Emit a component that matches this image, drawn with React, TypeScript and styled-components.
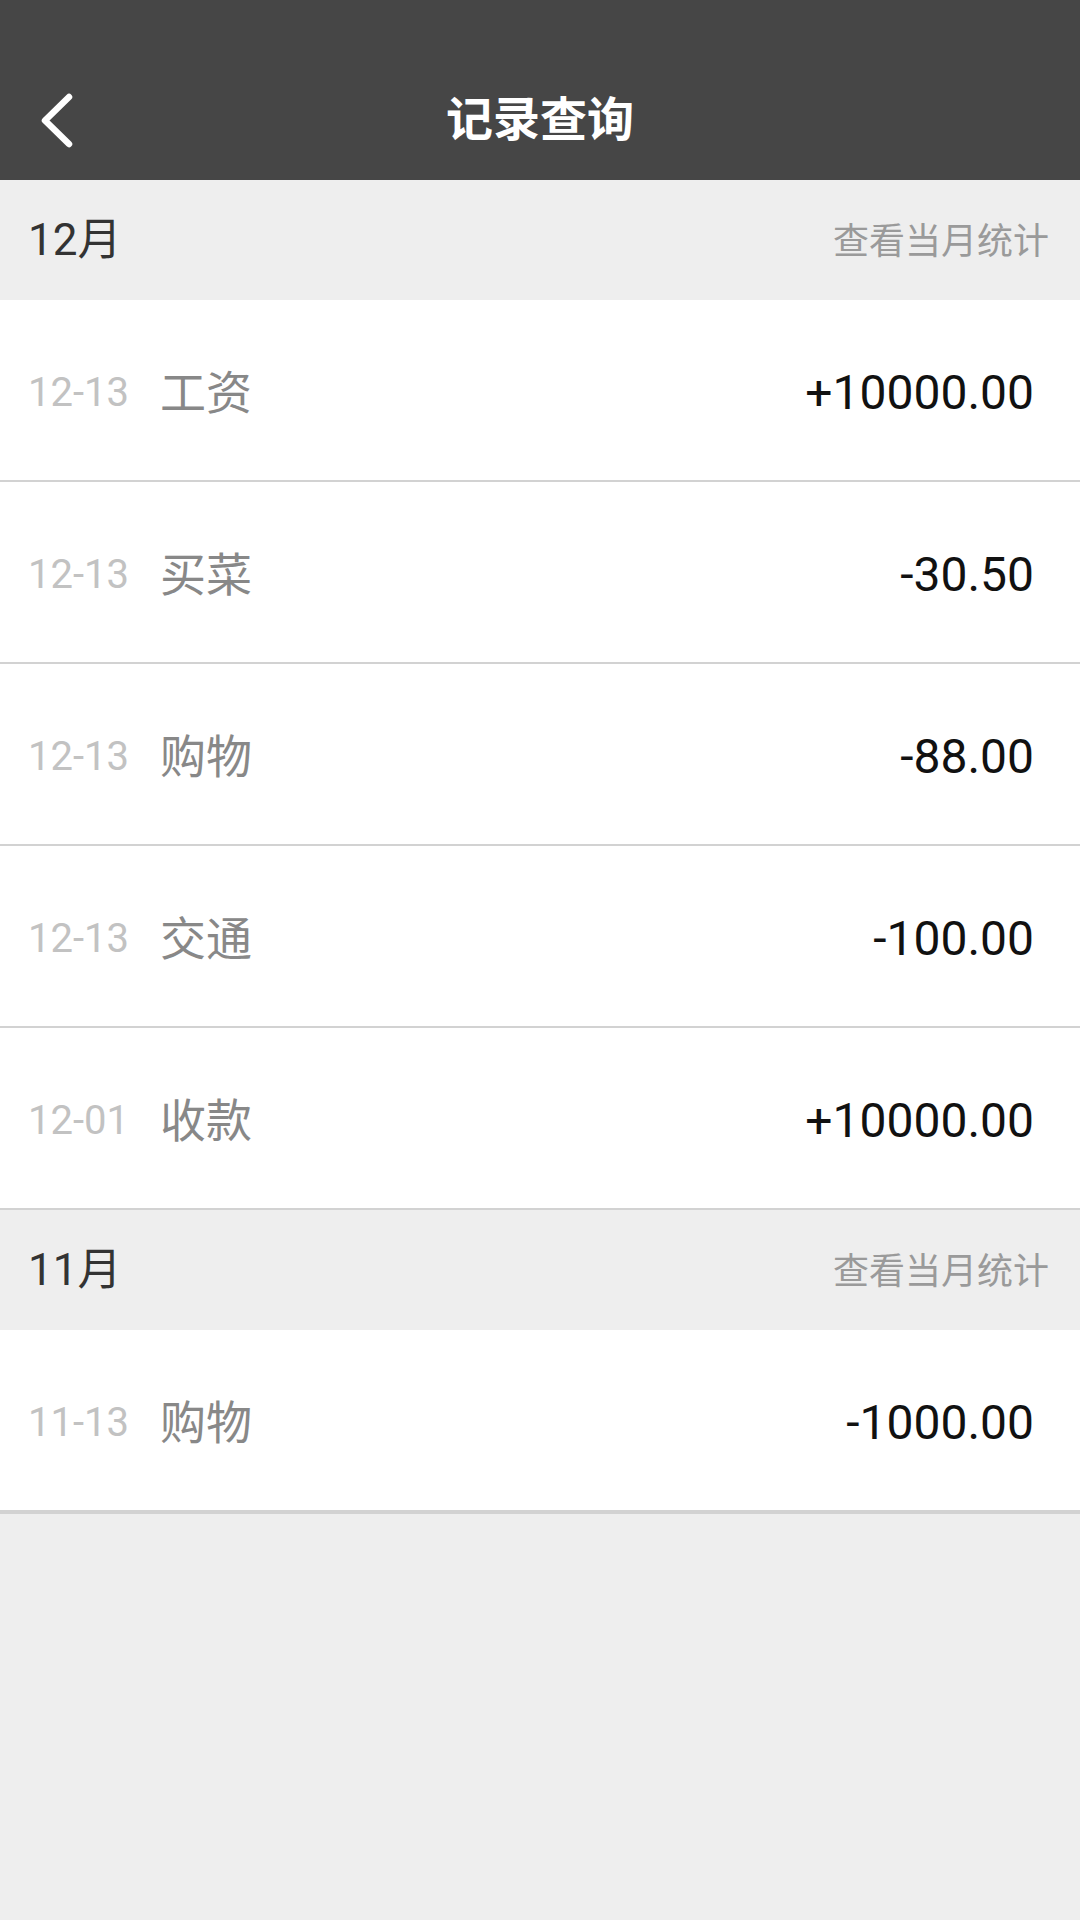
import React from "react";
import styled, { createGlobalStyle } from "styled-components";

const GlobalStyle = createGlobalStyle`
  html, body {
    margin: 0;
    padding: 0;
    background: #eeeeee;
  }
  body {
    font-family: Roboto, "Noto Sans CJK SC", sans-serif;
    -webkit-font-smoothing: antialiased;
  }
  * { box-sizing: border-box; }
`;

const Page = styled.div`
  width: 1080px;
  min-height: 1920px;
  background: #eeeeee;
  display: flex;
  flex-direction: column;
`;

const TopBar = styled.header`
  height: 180px;
  padding-top: 60px;
  background: #464646;
  display: grid;
  grid-template-columns: 140px 1fr 140px;
  align-items: center;
`;

const BackButton = styled.button`
  all: unset;
  width: 120px;
  height: 120px;
  display: flex;
  align-items: center;
  justify-content: flex-start;
  padding-left: 38px;
  cursor: pointer;
`;

const Title = styled.h1`
  margin: 0;
  padding-bottom: 10px;
  text-align: center;
  color: #ffffff;
  font-family: "Noto Sans CJK SC", sans-serif;
  font-weight: 700;
  font-size: 47px;
  line-height: 1;
`;

const MonthBar = styled.div`
  height: 120px;
  background: #eeeeee;
  display: flex;
  align-items: center;
  justify-content: space-between;
  padding: 0 31px 0 28px;
`;

const MonthLabel = styled.span`
  font-family: Roboto, "Noto Sans CJK SC", sans-serif;
  font-size: 44px;
  line-height: 1;
  color: #333333;
`;

const StatsLink = styled.span`
  font-family: "Noto Sans CJK SC", sans-serif;
  font-size: 36px;
  line-height: 1;
  padding-bottom: 5px;
  color: #9a9a9a;
`;

const List = styled.div<{ $last?: boolean }>`
  background: #ffffff;
  border-bottom: ${(p) => (p.$last ? "2px solid #d2d2d2" : "none")};
`;

const Row = styled.div`
  height: 182px;
  padding: 6px 46px 0 28px;
  display: flex;
  align-items: center;
  border-bottom: 2px solid #d2d2d2;
  background: #ffffff;
`;

const DateText = styled.span`
  font-family: Roboto, sans-serif;
  font-size: 40px;
  line-height: 1;
  color: #c2c2c2;
  margin-right: 31px;
`;

const Category = styled.span`
  font-family: "Noto Sans CJK SC", sans-serif;
  font-size: 46px;
  line-height: 1;
  padding-bottom: 9px;
  color: #888888;
  flex: 1;
`;

const Amount = styled.span`
  font-family: Roboto, sans-serif;
  font-size: 48px;
  line-height: 1;
  color: #111111;
`;

type Item = { date: string; name: string; amount: string };
type Group = { month: string; items: Item[] };

const groups: Group[] = [
  {
    month: "12月",
    items: [
      { date: "12-13", name: "工资", amount: "+10000.00" },
      { date: "12-13", name: "买菜", amount: "-30.50" },
      { date: "12-13", name: "购物", amount: "-88.00" },
      { date: "12-13", name: "交通", amount: "-100.00" },
      { date: "12-01", name: "收款", amount: "+10000.00" },
    ],
  },
  {
    month: "11月",
    items: [{ date: "11-13", name: "购物", amount: "-1000.00" }],
  },
];

const BackIcon = () => (
  <svg width="40" height="60" viewBox="0 0 40 60" fill="none">
    <polyline
      points="31,7 7,30.5 31,54"
      stroke="#ffffff"
      strokeWidth="6.5"
      strokeLinecap="round"
      strokeLinejoin="round"
    />
  </svg>
);

export default function App() {
  return (
    <>
      <GlobalStyle />
      <Page>
        <TopBar>
          <BackButton aria-label="返回">
            <BackIcon />
          </BackButton>
          <Title>记录查询</Title>
          <span />
        </TopBar>
        {groups.map((g, gi) => (
          <section key={g.month}>
            <MonthBar>
              <MonthLabel>{g.month}</MonthLabel>
              <StatsLink>查看当月统计</StatsLink>
            </MonthBar>
            <List $last={gi === groups.length - 1}>
              {g.items.map((it, i) => (
                <Row key={i}>
                  <DateText>{it.date}</DateText>
                  <Category>{it.name}</Category>
                  <Amount>{it.amount}</Amount>
                </Row>
              ))}
            </List>
          </section>
        ))}
      </Page>
    </>
  );
}
